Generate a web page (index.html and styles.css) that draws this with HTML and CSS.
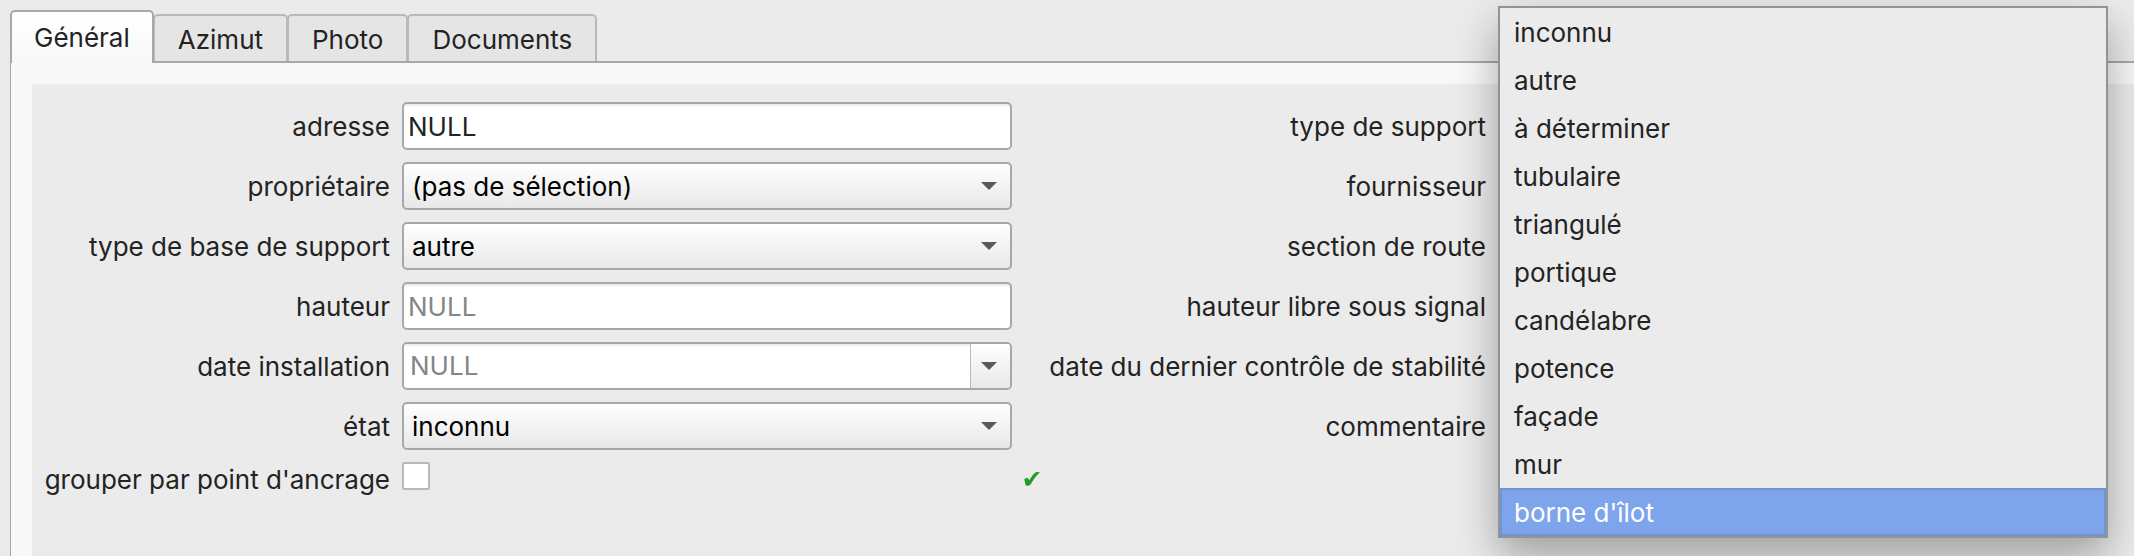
FILE: index.html
```html
<!DOCTYPE html>
<html lang="fr">
<head>
<meta charset="utf-8">
<title>Support</title>
<link rel="stylesheet" href="styles.css">
</head>
<body>
<div class="tabs" role="tablist">
  <button class="tab tab-active" role="tab" aria-selected="true">Général</button>
  <button class="tab" role="tab">Azimut</button>
  <button class="tab" role="tab">Photo</button>
  <button class="tab" role="tab">Documents</button>
</div>
<main class="panel">
  <form class="form">
    <label for="adresse">adresse</label>
    <input class="field" id="adresse" type="text" value="NULL">
    <label class="second" for="type-support">type de support</label>
    <div class="popup-anchor">
      <select class="popup" id="type-support" size="11">
        <option>inconnu</option>
        <option>autre</option>
        <option>à déterminer</option>
        <option>tubulaire</option>
        <option>triangulé</option>
        <option>portique</option>
        <option>candélabre</option>
        <option>potence</option>
        <option>façade</option>
        <option>mur</option>
        <option selected>borne d'îlot</option>
      </select>
    </div>

    <label for="proprietaire">propriétaire</label>
    <div class="combo">
      <select class="field" id="proprietaire"><option>(pas de sélection)</option></select>
      <svg class="arrow" viewBox="0 0 16 8"><path d="M0 0H16L8 8Z"/></svg>
    </div>
    <label class="second" for="fournisseur">fournisseur</label>
    <input class="field" id="fournisseur" type="text">

    <label for="base">type de base de support</label>
    <div class="combo">
      <select class="field" id="base"><option>autre</option></select>
      <svg class="arrow" viewBox="0 0 16 8"><path d="M0 0H16L8 8Z"/></svg>
    </div>
    <label class="second" for="section">section de route</label>
    <input class="field" id="section" type="text">

    <label for="hauteur">hauteur</label>
    <input class="field" id="hauteur" type="text" placeholder="NULL">
    <label class="second" for="hauteur-libre">hauteur libre sous signal</label>
    <input class="field" id="hauteur-libre" type="text">

    <label for="date">date installation</label>
    <div class="date">
      <input class="date-text" id="date" type="text" placeholder="NULL">
      <button class="date-button" type="button" aria-label="Ouvrir le calendrier">
        <svg class="arrow" viewBox="0 0 16 8"><path d="M0 0H16L8 8Z"/></svg>
      </button>
    </div>
    <label class="second" for="controle">date du dernier contrôle de stabilité</label>
    <input class="field" id="controle" type="text">

    <label for="etat">état</label>
    <div class="combo">
      <select class="field" id="etat"><option>inconnu</option></select>
      <svg class="arrow" viewBox="0 0 16 8"><path d="M0 0H16L8 8Z"/></svg>
    </div>
    <label class="second" for="commentaire">commentaire</label>
    <input class="field" id="commentaire" type="text">

    <label for="grouper">grouper par point d'ancrage</label>
    <input class="check" id="grouper" type="checkbox">
    <svg class="valid" viewBox="0 0 16 14"><path d="M.3 7.500C1.500 5.500 4 5.500 4.600 7L5.200 8.500C7 5 9.500 1.500 11.500 .4C12.500 0 14.500 0 15.800 .2C12 4 9.500 7.500 7 11.800C5.500 14.200 2 14.500 1.500 12.500Z"/></svg>
  </form>
</main>
</body>
</html>
```
FILE: styles.css
```css
* {
  box-sizing: border-box;
}

body {
  margin: 0;
  padding: 10px 0 0 10px;
  min-height: 100vh;
  display: flex;
  flex-direction: column;
  background: #ebebeb;
  color: #232323;
  font: 26px/32px Inter, "Liberation Sans", sans-serif;
}

input,
select,
button {
  margin: 0;
  font: inherit;
  color: inherit;
  outline: none;
}

/* Tabs */
.tabs {
  display: flex;
  align-items: flex-end;
  height: 53px;
  margin-bottom: -2px;
}

.tab {
  height: 49px;
  padding: 3px 23px 0;
  margin-left: -1px;
  border: 2px solid #b9b9b9;
  border-bottom-color: #a8a8a8;
  border-radius: 5px 5px 0 0;
  background: #e5e5e5;
}

.tab-active {
  position: relative;
  z-index: 1;
  height: 53px;
  padding: 1px 22px 0;
  margin-left: 0;
  border-color: #a8a8a8;
  border-bottom: 0;
  background: linear-gradient(#ffffff, #f8f8f8);
}

/* Form */
.panel {
  flex: 1;
  display: flex;
  padding: 21px 0 0 21px;
  border-top: 2px solid #a8a8a8;
  border-left: 1px solid #a8a8a8;
  background: #f8f8f8;
}

.form {
  flex: 1;
  display: grid;
  grid-template-columns: 340px 1fr 18px 432px 1fr;
  gap: 12px;
  align-content: start;
  align-items: center;
  padding: 18px 26px 0 18px;
  background: #ebebeb;
}

label {
  grid-column: 1;
  justify-self: end;
  padding-top: 2px;
  white-space: nowrap;
}

.second {
  grid-column: 4;
}

.field,
.date {
  width: 100%;
  height: 48px;
  border: 2px solid #a8a8a8;
  border-radius: 5px;
  background: #ffffff;
}

.field {
  padding: 0 4px;
}

input.field,
.date-text {
  box-shadow: inset 0 2px 0 #eeeeee;
}

::placeholder {
  color: #858585;
  opacity: 1;
}

.combo {
  display: grid;
  align-items: center;
}

.combo > * {
  grid-area: 1 / 1;
}

.combo .field {
  appearance: none;
  padding: 2px 48px 0 8px;
  background: linear-gradient(#ffffff, #e8e8e8);
  color: #000000;
}

.arrow {
  width: 16px;
  height: 8px;
  fill: #595959;
}

.combo .arrow {
  justify-self: end;
  margin-right: 15px;
  pointer-events: none;
}

.date {
  display: flex;
  overflow: hidden;
}

.date-text {
  flex: 1;
  min-width: 0;
  padding: 0 6px;
  border: 0;
  background: transparent;
}

.date-button {
  display: flex;
  align-items: center;
  justify-content: flex-end;
  width: 40px;
  padding: 0 13px 0 0;
  border: 0;
  border-left: 1px solid #b9b9b9;
  background: linear-gradient(#ffffff, #e8e8e8);
}

.check {
  appearance: none;
  align-self: start;
  width: 28px;
  height: 28px;
  border: 2px solid #b9b9b9;
  border-radius: 2px;
  background: #ffffff;
}

.valid {
  width: 16px;
  height: 14px;
  fill: #289b22;
}

/* Open list of support types */
.popup-anchor {
  position: relative;
  height: 48px;
}

.popup {
  position: absolute;
  z-index: 2;
  top: -96px;
  left: 0;
  width: 100%;
  height: 532px;
  padding: 0;
  border: 2px solid #939393;
  border-radius: 0;
  background: #ebebeb;
  box-shadow: 0 18px 40px rgba(0, 0, 0, 0.33);
  overflow: hidden;
}

.popup option {
  height: 48px;
  min-height: 48px;
  padding: 9px 14px 0;
}

.popup option:checked {
  background: linear-gradient(#7ea5ec, #7ea5ec);
  box-shadow: inset 0 0 0 2px #6f95d7;
  -webkit-text-fill-color: #ffffff;
}
```
